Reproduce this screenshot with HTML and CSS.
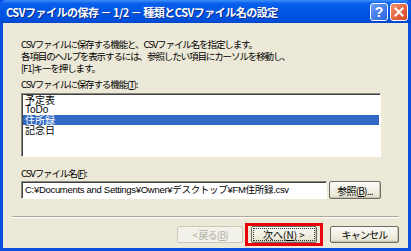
FILE: index.html
```html
<!DOCTYPE html>
<html lang="ja">
<head>
<meta charset="utf-8">
<title>CSVファイルの保存</title>
<link rel="stylesheet" href="styles.css">
</head>
<body>
<div class="window">
  <div class="titlebar">
    <span class="title">CSVファイルの保存 － 1/2 － 種類とCSVファイル名の設定</span>
    <span class="tb-btn help">?</span>
    <span class="tb-btn close">
      <svg width="10" height="10" viewBox="0 0 10 10"><path d="M1.5 1.5 L8.5 8.5 M8.5 1.5 L1.5 8.5" stroke="#fff" stroke-width="2" stroke-linecap="square"/></svg>
    </span>
  </div>
  <div class="client">
    <div class="content">
      <p class="intro">CSVファイルに保存する機能と、CSVファイル名を指定します。<br>各項目のヘルプを表示するには、参照したい項目にカーソルを移動し、<br>[F1]キーを押します。</p>
      <div class="label">CSVファイルに保存する機能(<u>T</u>):</div>
      <ul class="listbox">
        <li>予定表</li>
        <li class="latin">ToDo</li>
        <li class="selected">住所録</li>
        <li>記念日</li>
      </ul>
      <div class="label label-file">CSVファイル名(<u>F</u>):</div>
      <div class="file-row">
        <div class="textbox">C:¥Documents and Settings¥Owner¥デスクトップ¥FM住所録.csv</div>
        <button class="btn browse">参照(<u>B</u>)...</button>
      </div>
    </div>
    <div class="separator"></div>
    <div class="buttons">
      <button class="btn disabled">&lt; 戻る(<u>B</u>)</button>
      <span class="highlight"><button class="btn default"><span class="focus">次へ(<u>N</u>) &gt;</span></button></span>
      <button class="btn cancel">キャンセル</button>
    </div>
  </div>
</div>
</body>
</html>
```

FILE: styles.css
```css
html, body {
  margin: 0;
  padding: 0;
}
body {
  width: 411px;
  height: 251px;
  overflow: hidden;
  font-family: "Noto Sans CJK JP", "Liberation Sans", sans-serif;
  font-size: 9.5px;
  color: #000;
}
.window {
  height: 251px;
  box-sizing: border-box;
  display: flex;
  flex-direction: column;
  background: #0a4ee0;
  padding: 0 3px 3px 3px;
}
.titlebar {
  height: 23px;
  display: flex;
  align-items: center;
  margin: 0 -3px;
  padding: 0 3px 0 6px;
  background: linear-gradient(#3d8ff8 0%, #0a5fec 15%, #0055e5 50%, #0050de 85%, #0046c8 100%);
  border-radius: 6px 6px 0 0;
}
.title {
  flex: 1;
  color: #fff;
  font-weight: bold;
  font-size: 11px;
  letter-spacing: -0.5px;
  text-shadow: 1px 1px 0 #0a2a8a;
  white-space: nowrap;
}
.tb-btn {
  width: 16px;
  height: 16px;
  border: 1px solid #fff;
  border-radius: 3px;
  display: flex;
  align-items: center;
  justify-content: center;
  color: #fff;
  font-family: "Liberation Sans", sans-serif;
  font-weight: bold;
  font-size: 14px;
}
.help {
  background: linear-gradient(135deg, #6c9cf5, #2a63e0);
  margin-right: 2px;
}
.close {
  background: linear-gradient(135deg, #f0906e, #d8451d);
}
.client {
  flex: 1;
  background: #ece9d8;
  display: flex;
  flex-direction: column;
}
.content {
  padding: 15px 27px 0 18px;
}
.intro {
  margin: 0;
  line-height: 12px;
  letter-spacing: -1.1px;
  white-space: nowrap;
}
.label {
  margin-top: 4px;
  line-height: 12px;
  letter-spacing: -1.1px;
}
.label-file {
  margin-top: 10px;
}
u {
  text-decoration: underline;
}
.listbox {
  list-style: none;
  margin: 3px 0 0 0;
  padding: 1px 1px;
  height: 60px;
  background: #fff;
  border-top: 1px solid #8a8a84;
  border-left: 1px solid #8a8a84;
  border-right: 1px solid #fff;
  border-bottom: 1px solid #fff;
  box-shadow: inset 1px 1px 0 #404040;
}
.listbox li {
  height: 10px;
  line-height: 10px;
  padding-left: 2px;
  font-size: 10px;
}
.listbox li.latin {
  font-family: "Liberation Sans", sans-serif;
  font-size: 10px;
}
.listbox li.selected {
  background: #316ac5;
  color: #fff;
}
.file-row {
  display: flex;
  margin-top: 2px;
  margin-right: -1px;
}
.textbox {
  width: 306px;
  height: 18px;
  box-sizing: border-box;
  background: #fff;
  border-top: 1px solid #8a8a84;
  border-left: 1px solid #8a8a84;
  border-right: 1px solid #fff;
  border-bottom: 1px solid #fff;
  box-shadow: inset 1px 1px 0 #404040;
  padding: 2px 0 0 3px;
  font-size: 9.5px;
  line-height: 12px;
  letter-spacing: -0.3px;
  white-space: nowrap;
  overflow: hidden;
  font-family: "Liberation Sans", "Noto Sans CJK JP", sans-serif;
}
.btn {
  font-family: "Noto Sans CJK JP", "Liberation Sans", sans-serif;
  font-size: 10px;
  letter-spacing: -0.8px;
  height: 17px;
  padding: 0;
  border: 1px solid #6c6c64;
  border-radius: 2px;
  background: linear-gradient(#fbfbf8, #ece9d8 80%, #d6d2c2);
  box-shadow: inset -1px -1px 0 #c7c3b3;
  color: #000;
  line-height: 13px;
}
.browse {
  width: 52px;
  height: 18px;
  margin-left: 2px;
}
.separator {
  margin: 17px 9px 0 9px;
  border-top: 1px solid #aca899;
  border-bottom: 1px solid #fff;
}
.buttons {
  display: flex;
  align-items: center;
  justify-content: flex-end;
  padding: 5px 9px 0 0;
}
.disabled {
  width: 66px;
  color: #b3b0a2;
  border-color: #c9c7ba;
  box-shadow: none;
  background: #f2f1ea;
}
.highlight {
  display: flex;
  border: 3px solid #e8000b;
  padding: 0 3px;
  margin-left: 2px;
}
.default {
  width: 66px;
  display: flex;
  align-items: center;
  justify-content: center;
}
.focus {
  display: block;
  width: 60px;
  border: 1px dotted #333;
  line-height: 11px;
  letter-spacing: 0;
}
.cancel {
  width: 69px;
  margin-left: 7px;
}
```
